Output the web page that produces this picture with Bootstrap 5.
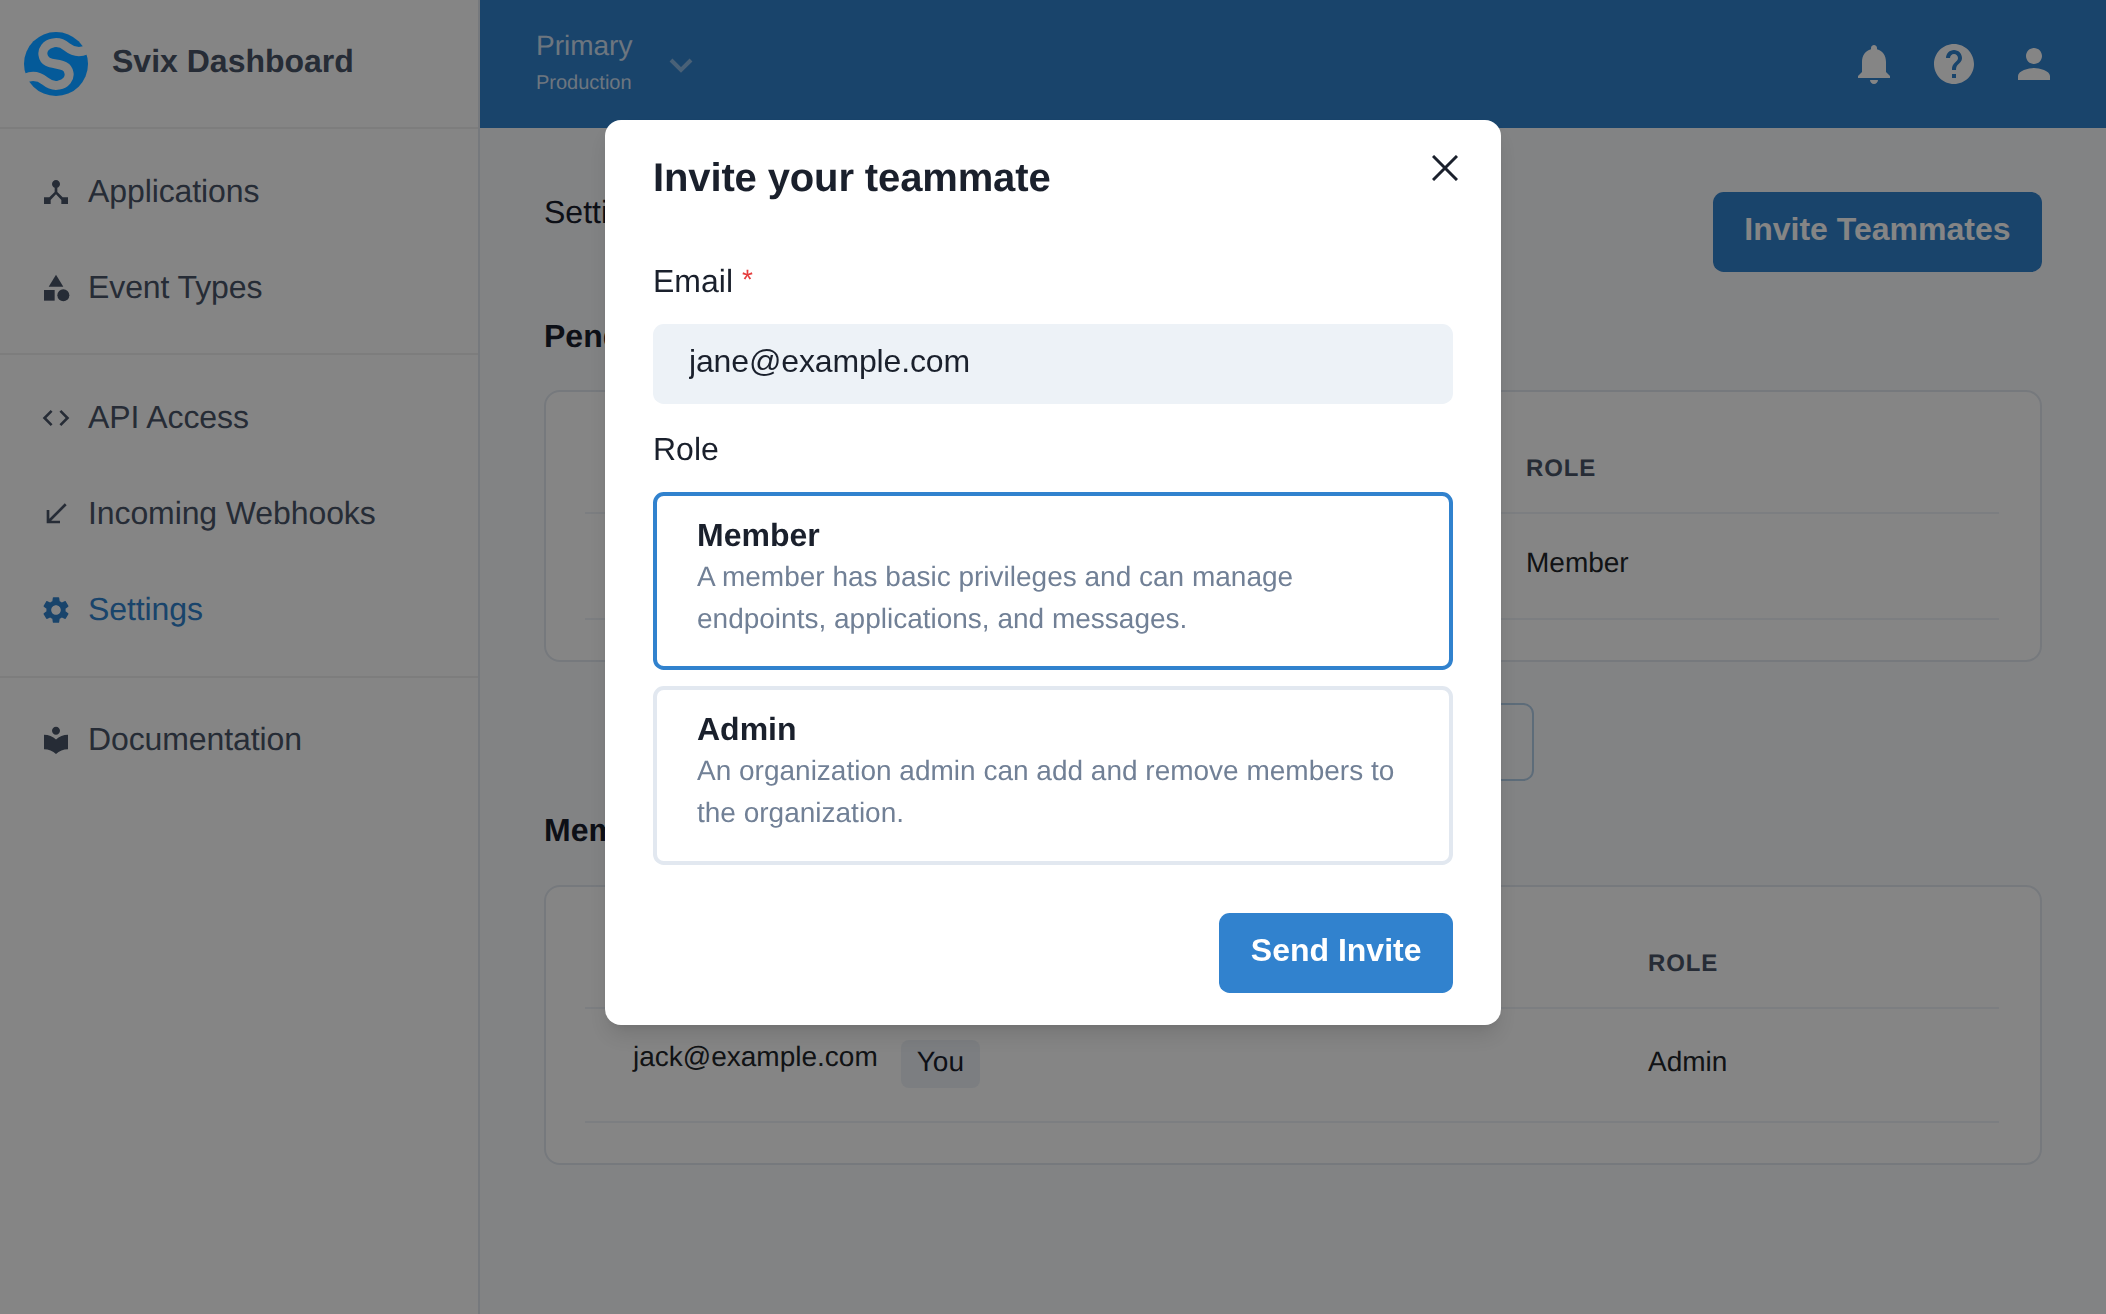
<!doctype html>
<html lang="en">
<head>
<meta charset="utf-8">
<title>Svix Dashboard</title>
<link href="https://cdn.jsdelivr.net/npm/bootstrap@5.3.0/dist/css/bootstrap.min.css" rel="stylesheet">
<style>
html,body{height:100%;overflow:hidden}
body{font-family:"Liberation Sans",Arial,sans-serif;font-size:32px;color:#1A202C;background:#FAFBFD;text-rendering:geometricPrecision}
.shell{height:1314px}
.side{width:480px;flex:none;background:#fff;border-right:2px solid #E2E8F0;height:1314px}
.brand{height:129px;border-bottom:2px solid #EFEFF0;padding-left:24px;gap:24px;color:#4A5568;font-weight:700;line-height:1}
.brand-text{margin-top:-6px}
.logo-mark{position:relative;z-index:1051;width:64px;height:64px;flex:none}
.side-group{border-bottom:2px solid #EFEFF0}
.g1{padding:15px 0 17px}
.g2{padding:15px 0 18px}
.g3{padding:14px 0}
.side-link{height:96px;padding-left:40px;gap:16px;color:#4A5568;text-decoration:none;line-height:1;letter-spacing:-.1px}
.side-link svg{width:32px;height:32px;flex:none;fill:currentColor}
.side-link span{margin-top:-2px}
.side-link.on{color:#3182CE}
.mainpane{min-width:0}
.topbar{height:128px;background:#3182CE;color:#fff;padding:0 48px 0 56px}
.org{line-height:1;color:rgba(255,255,255,.78)}
.org-a{font-size:28px;margin-top:-3px;margin-bottom:13px}
.org-b{font-size:20px}
.chev{width:24px;height:15px;margin-left:37px;margin-top:2px;fill:none;stroke:rgba(255,255,255,.45);stroke-width:4}
.top-icons{gap:32px}
.top-icons svg{width:48px;height:48px;fill:#fff;display:block}
.content{padding:64px 64px 0}
.crumb{line-height:1;margin-top:4px}
.act-btn{--bs-btn-bg:#3182CE;--bs-btn-border-color:#3182CE;--bs-btn-color:#fff;--bs-btn-hover-bg:#3182CE;--bs-btn-hover-color:#fff;--bs-btn-border-radius:10.67px;font-size:32px;font-weight:700;line-height:1;border:0;padding:0 31.5px 7px}
.btn-invite{height:80px}
.sec-title{font-size:32px;font-weight:700;line-height:1;margin:0}
.t1{margin-top:48px;margin-bottom:38px}
.t2{margin-top:33px;margin-bottom:39px}
.panel{background:#fff;border:2px solid #E2E8F0;border-radius:16px;padding:31px 41px 40px 39px}
.grid-t{--bs-table-bg:transparent;margin:0;font-size:28px;table-layout:fixed;width:100%}
.grid-t th,.grid-t td{border-bottom:2px solid #EDF2F7;padding:0 0 0 48px;vertical-align:middle}
.grid-t th{height:90px;padding-top:3px;font-size:24px;font-weight:700;letter-spacing:.9px;color:#4A5568;text-transform:uppercase}
.grid-t td{padding-bottom:6px;line-height:1}
.h-a td{height:106px}
.h-b td{height:114px}
.h-b td.who{padding-bottom:2px}
.w-a{width:893px}
.w-b{width:1015px}
.who-email{margin-top:-15px}
.ghost-wrap{margin-top:41px;padding-left:320px}
.ghost-box{height:78px;width:670px;border:2px solid #B3CFE9;border-radius:10.67px}
.you{background:#EDF2F7;color:#1A202C;border-radius:8px;height:48px;padding:0 16px;line-height:44px;margin-left:23px}
.modal-backdrop.show{opacity:.48}
.modal-backdrop{--bs-backdrop-opacity:.48}
.dlg{max-width:896px;margin:120px auto 0}
.dlg .modal-content{border:0;border-radius:16px;box-shadow:0 13px 20px -4px rgba(0,0,0,.12),0 5px 8px -3px rgba(0,0,0,.06);height:905px;padding:0 48px}
.dlg-title{font-size:40px;font-weight:700;line-height:1;margin:38px 0 0;letter-spacing:-.13px}
.dlg-x{position:absolute;top:35px;right:43px;width:26px;height:26px;padding:0;border:0;background:none;line-height:0}
.dlg-x svg{width:26px;height:26px;stroke:#1A202C;stroke-width:3;fill:none}
.fld-label{display:block;line-height:1;margin:0}
.l-mail{margin-top:67px;margin-bottom:27px}
.l-role{margin-top:29px;margin-bottom:27px}
.req{color:#E53E3E;font-size:28px;margin-left:9px;vertical-align:3px}
.mail-input{height:80px;background:#EDF2F7;border:0;border-radius:10.67px;font-size:32px;color:#1A202C;padding:0 36px 5px;line-height:1;letter-spacing:-.15px}
.pick{border:4px solid #E2E8F0;border-radius:10.67px;padding:19px 40px 24px;height:178px}
.pick.sel{border-color:#3182CE}
.pick + .pick{margin-top:16px;height:179px}
.pick-name{font-weight:700;line-height:41px}
.pick-desc{font-size:28px;line-height:42px;color:#718096}
.dlg-foot{margin-top:48px}
.btn-send{height:80px}
</style>
</head>
<body>
<div class="shell d-flex">
  <aside class="side d-flex flex-column">
    <div class="brand d-flex align-items-center">
      <svg class="logo-mark" viewBox="0 0 64 64" aria-hidden="true">
        <defs><mask id="ribbon"><rect width="64" height="64" fill="#fff"/><path d="M68 15C56 23 48 19 43 15C38 11 33 10 29 11C22 12 18 18 19 23C20 30 26 31 32 32C38 33 44 34 45 41C46 46 42 52 35 53C31 54 26 53 21 49C16 45 8 41 -4 49" fill="none" stroke="#000" stroke-width="9"/></mask></defs>
        <circle cx="32" cy="32" r="32" fill="#045A99" mask="url(#ribbon)"/>
      </svg>
      <span class="brand-text">Svix Dashboard</span>
    </div>
    <div class="side-group g1">
      <a class="side-link d-flex align-items-center" href="#"><svg viewBox="0 0 24 24"><path d="M17 16l-4-4V8.82C14.16 8.4 15 7.3 15 6c0-1.66-1.34-3-3-3S9 4.34 9 6c0 1.3.84 2.4 2 2.82V12l-4 4H3v5h5v-3.05l4-4.2 4 4.2V21h5v-5h-4z"/></svg><span>Applications</span></a>
      <a class="side-link d-flex align-items-center" href="#"><svg viewBox="0 0 24 24"><path d="M12 2l-5.5 9h11z"/><circle cx="17.5" cy="17.5" r="4.5"/><path d="M3 13.5h8v8H3z"/></svg><span>Event Types</span></a>
    </div>
    <div class="side-group g2">
      <a class="side-link d-flex align-items-center" href="#"><svg viewBox="0 0 24 24"><path d="M9.4 16.6L4.8 12l4.6-4.6L8 6l-6 6 6 6 1.4-1.4zm5.2 0l4.6-4.6-4.6-4.6L16 6l6 6-6 6-1.4-1.4z"/></svg><span>API Access</span></a>
      <a class="side-link d-flex align-items-center" href="#"><svg viewBox="0 0 24 24"><path d="M20 5.41L18.59 4 7 15.59V9H5v10h10v-2H8.41z"/></svg><span>Incoming Webhooks</span></a>
      <a class="side-link on d-flex align-items-center" href="#"><svg viewBox="0 0 24 24"><path d="M19.14 12.94c.04-.3.06-.61.06-.94 0-.32-.02-.64-.07-.94l2.03-1.58c.18-.14.23-.41.12-.61l-1.92-3.32c-.12-.22-.37-.29-.59-.22l-2.39.96c-.5-.38-1.03-.7-1.62-.94l-.36-2.54c-.04-.24-.24-.41-.48-.41h-3.84c-.24 0-.43.17-.47.41l-.36 2.54c-.59.24-1.13.57-1.62.94l-2.39-.96c-.22-.08-.47 0-.59.22L2.74 8.87c-.12.21-.08.47.12.61l2.03 1.58c-.05.3-.09.63-.09.94s.02.64.07.94l-2.03 1.58c-.18.14-.23.41-.12.61l1.92 3.32c.12.22.37.29.59.22l2.39-.96c.5.38 1.03.7 1.62.94l.36 2.54c.05.24.24.41.48.41h3.84c.24 0 .44-.17.47-.41l.36-2.54c.59-.24 1.13-.56 1.62-.94l2.39.96c.22.08.47 0 .59-.22l1.92-3.32c.12-.22.07-.47-.12-.61l-2.01-1.58zM12 15.6c-1.98 0-3.6-1.62-3.6-3.6s1.62-3.6 3.6-3.6 3.6 1.62 3.6 3.6-1.62 3.6-3.6 3.6z"/></svg><span>Settings</span></a>
    </div>
    <div class="g3">
      <a class="side-link d-flex align-items-center" href="#"><svg viewBox="0 0 24 24"><path d="M12 11.55C9.64 9.35 6.48 8 3 8v11c3.48 0 6.64 1.35 9 3.55 2.36-2.19 5.52-3.55 9-3.55V8c-3.48 0-6.64 1.35-9 3.55zM12 8c1.66 0 3-1.34 3-3s-1.34-3-3-3-3 1.34-3 3 1.34 3 3 3z"/></svg><span>Documentation</span></a>
    </div>
  </aside>
  <div class="mainpane flex-grow-1 d-flex flex-column">
    <header class="topbar d-flex align-items-center justify-content-between">
      <div class="d-flex align-items-center">
        <div class="org"><div class="org-a">Primary</div><div class="org-b">Production</div></div>
        <svg class="chev" viewBox="0 0 24 15"><path d="M2 2l10 10L22 2"/></svg>
      </div>
      <div class="top-icons d-flex">
        <svg viewBox="0 0 24 24"><path d="M12 22c1.1 0 2-.9 2-2h-4c0 1.1.89 2 2 2zm6-6v-5c0-3.07-1.64-5.64-4.5-6.32V4c0-.83-.67-1.5-1.5-1.5s-1.5.67-1.5 1.5v.68C7.63 5.36 6 7.92 6 11v5l-2 2v1h16v-1l-2-2z"/></svg>
        <svg viewBox="0 0 24 24"><path d="M12 2C6.48 2 2 6.48 2 12s4.48 10 10 10 10-4.48 10-10S17.52 2 12 2zm1 17h-2v-2h2v2zm2.07-7.75l-.9.92C13.45 12.9 13 13.5 13 15h-2v-.5c0-1.1.45-2.1 1.17-2.83l1.24-1.26c.37-.36.59-.86.59-1.41 0-1.1-.9-2-2-2s-2 .9-2 2H8c0-2.21 1.79-4 4-4s4 1.79 4 4c0 .88-.36 1.68-.93 2.25z"/></svg>
        <svg viewBox="0 0 24 24"><path d="M12 12c2.21 0 4-1.79 4-4s-1.79-4-4-4-4 1.79-4 4 1.79 4 4 4zm0 2c-2.67 0-8 1.34-8 4v2h16v-2c0-2.66-5.33-4-8-4z"/></svg>
      </div>
    </header>
    <main class="content">
      <div class="d-flex justify-content-between align-items-start">
        <div class="crumb">Settings</div>
        <button type="button" class="btn act-btn btn-invite">Invite Teammates</button>
      </div>
      <h2 class="sec-title t1">Pending</h2>
      <div class="panel">
        <table class="table grid-t">
          <thead><tr><th class="w-a"></th><th>Role</th></tr></thead>
          <tbody><tr class="h-a"><td></td><td>Member</td></tr></tbody>
        </table>
      </div>
      <div class="ghost-wrap"><div class="ghost-box"></div></div>
      <h2 class="sec-title t2">Members</h2>
      <div class="panel">
        <table class="table grid-t">
          <thead><tr><th class="w-b"></th><th>Role</th></tr></thead>
          <tbody><tr class="h-b"><td class="who"><div class="d-flex align-items-center"><span class="who-email">jack@example.com</span><span class="you">You</span></div></td><td>Admin</td></tr></tbody>
        </table>
      </div>
    </main>
  </div>
</div>

<div class="modal-backdrop show"></div>
<div class="modal d-block" role="dialog" aria-modal="true">
  <div class="modal-dialog dlg">
    <div class="modal-content">
      <h1 class="dlg-title">Invite your teammate</h1>
      <button type="button" class="dlg-x" aria-label="Close"><svg viewBox="0 0 26 26"><path d="M1 1l24 24M25 1L1 25"/></svg></button>
      <label class="fld-label l-mail" for="mail">Email<span class="req">*</span></label>
      <input id="mail" class="form-control mail-input" type="email" value="jane@example.com">
      <div class="fld-label l-role">Role</div>
      <div class="pick sel">
        <div class="pick-name">Member</div>
        <div class="pick-desc">A member has basic privileges and can manage endpoints, applications, and messages.</div>
      </div>
      <div class="pick">
        <div class="pick-name">Admin</div>
        <div class="pick-desc">An organization admin can add and remove members to the organization.</div>
      </div>
      <div class="dlg-foot d-flex justify-content-end">
        <button type="button" class="btn act-btn btn-send">Send Invite</button>
      </div>
    </div>
  </div>
</div>
<script src="https://cdn.jsdelivr.net/npm/bootstrap@5.3.0/dist/js/bootstrap.bundle.min.js"></script>
</body>
</html>
